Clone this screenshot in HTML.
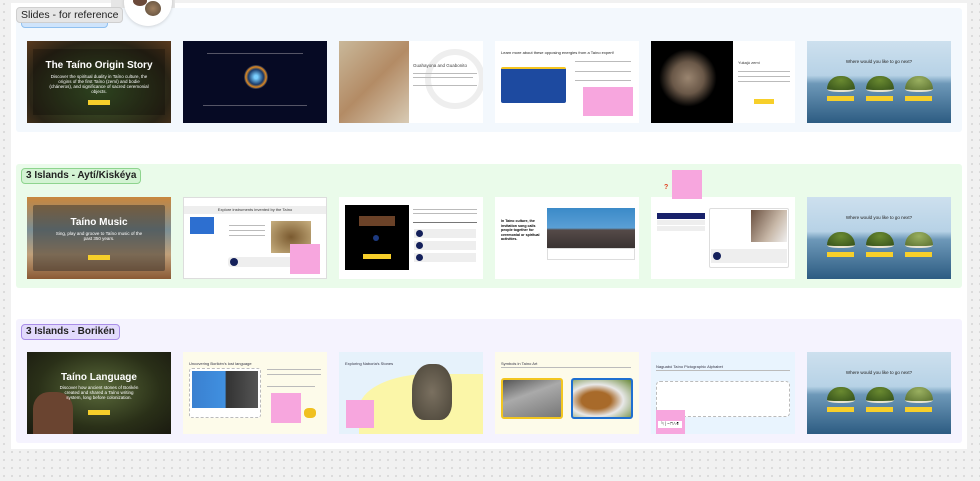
<!DOCTYPE html>
<html><head><meta charset="utf-8"><style>
*{margin:0;padding:0;box-sizing:border-box}
body{width:980px;height:481px;overflow:hidden;background:#f1f1f1;font-family:"Liberation Sans",sans-serif;position:relative;
background-image:radial-gradient(#c8c8c8 0.7px,transparent 0.9px);background-size:8px 8px}
.abs{position:absolute}
.frame{left:11px;top:3px;width:956px;height:446px;background:#fff}
.sec{left:16px;width:946px;height:124px;border-radius:3px}
.lbl{font-size:10px;font-weight:bold;color:#222;border-radius:4px;padding:1px 4px;line-height:12px}
.s{width:144px;height:82px;overflow:hidden;position:absolute}
.t{position:absolute;color:#fff;font-weight:bold;text-align:center;width:100%}
.ln{position:absolute;height:1px;background:#bbb}
.btn{position:absolute;background:#f7cf2a;height:5px}
.pink{position:absolute;background:#f7a6de}
.isl{position:absolute;width:28px;height:16px;border-radius:50% 50% 45% 45%/90% 90% 20% 20%;background:radial-gradient(ellipse at 50% 30%,#6a8a30,#34501a);border-bottom:2px solid #e8e4d0}
.sea{background:linear-gradient(#cde0ee 0%,#b7d2e6 42%,#6d98b8 52%,#2d5c82 100%)}
</style></head><body>
<div class="abs frame"></div>
<div class="abs" style="left:111px;top:0;width:64px;height:9px;background:#e6e6e6"></div>

<div class="abs sec" style="top:8px;background:#f3f8fd"></div>
<div class="abs sec" style="top:164px;background:#eafbea"></div>
<div class="abs sec" style="top:319px;background:#f5f3fe"></div>

<div class="abs" style="left:124px;top:-22px;width:48px;height:48px;border-radius:50%;background:#fff;box-shadow:0 1px 3px rgba(0,0,0,.15)"></div>
<div class="abs" style="left:133px;top:-4px;width:14px;height:10px;border-radius:50%;background:#6b4a3a"></div>
<div class="abs" style="left:145px;top:1px;width:16px;height:15px;border-radius:50%;background:radial-gradient(#a08060,#5a4a3a)"></div>

<div class="abs lbl" style="left:21px;top:12px;background:#cfe4fb;border:1px solid #8fc0f0">3 Islands - Kuba</div>
<div class="abs lbl" style="left:16px;top:7px;background:#e6e6e6;border:1px solid #cfcfcf;font-weight:normal;font-size:10.5px">Slides - for reference</div>
<div class="abs lbl" style="left:21px;top:168px;background:#d3f3d3;border:1px solid #8ed48e">3 Islands - Aytí/Kiskéya</div>
<div class="abs lbl" style="left:21px;top:324px;background:#e2dafc;border:1px solid #a98ee8">3 Islands - Borikén</div>

<!-- Row 1 -->
<div class="s" style="left:27px;top:41px;background:radial-gradient(ellipse at 50% 60%,#3d5a2a,#2a2416 70%,#5a3a1e)">
<div style="position:absolute;left:6px;top:8px;width:132px;height:66px;background:rgba(0,0,0,.25)"></div>
<div class="t" style="top:19px;font-size:10px">The Taíno Origin Story</div>
<div class="t" style="top:33px;font-size:4.5px;font-weight:normal;line-height:5px;padding:0 22px">Discover the spiritual duality in Taíno culture, the origins of the first Taíno (zemí) and bodie (cháneros), and significance of sacred ceremonial objects.</div>
<div class="btn" style="left:61px;top:59px;width:22px"></div></div>
<div class="s" style="left:183px;top:41px;background:#060a24">
<div style="position:absolute;left:61px;top:24px;width:24px;height:24px;border-radius:50%;background:radial-gradient(#7ad0ff 10%,#1a3a6a 45%,#e08a20 60%,#1a2a50 70%)"></div>
<div class="ln" style="left:24px;top:12px;width:96px;background:#556"></div>
<div class="ln" style="left:20px;top:64px;width:104px;background:#556"></div></div>
<div class="s" style="left:339px;top:41px;background:#fff">
<div style="position:absolute;left:0;top:0;width:70px;height:82px;background:linear-gradient(135deg,#c9b89a,#b38b65 50%,#d8cbb5)"></div>
<div style="position:absolute;left:86px;top:8px;width:60px;height:60px;border-radius:50%;border:6px solid #eee"></div>
<div style="position:absolute;left:74px;top:22px;font-size:4.5px;color:#444">Guahayona and Guabonito</div>
<div class="ln" style="left:74px;top:32px;width:64px"></div><div class="ln" style="left:74px;top:36px;width:60px"></div><div class="ln" style="left:74px;top:44px;width:64px"></div></div>
<div class="s" style="left:495px;top:41px;background:#fff">
<div style="position:absolute;left:6px;top:9px;font-size:4px;color:#222">Learn more about these opposing energies from a Taíno expert!</div>
<div style="position:absolute;left:6px;top:26px;width:65px;height:36px;background:#1d4aa0;border-top:2px solid #f5c520;border-radius:2px"></div>
<div class="ln" style="left:80px;top:20px;width:56px"></div><div class="ln" style="left:80px;top:30px;width:56px"></div><div class="ln" style="left:80px;top:39px;width:56px"></div>
<div class="pink" style="left:88px;top:46px;width:50px;height:29px"></div></div>
<div class="s" style="left:651px;top:41px;background:#fff">
<div style="position:absolute;left:0;top:0;width:82px;height:82px;background:radial-gradient(ellipse at 45% 45%,#9a8570 0,#6a5848 25%,#000 45%)"></div>
<div style="position:absolute;left:87px;top:19px;font-size:4px;color:#333">Yukajú zemí</div>
<div class="ln" style="left:87px;top:30px;width:52px"></div><div class="ln" style="left:87px;top:35px;width:52px"></div><div class="ln" style="left:87px;top:40px;width:52px"></div>
<div class="btn" style="left:103px;top:58px;width:20px"></div></div>
<div class="s sea" style="left:807px;top:41px">
<div style="position:absolute;top:18px;width:100%;text-align:center;font-size:4.5px;color:#222">Where would you like to go next?</div>
<div class="isl" style="left:20px;top:35px"></div><div class="isl" style="left:59px;top:35px"></div><div class="isl" style="left:98px;top:35px;background:radial-gradient(ellipse at 50% 30%,#9ab060,#5a7030)"></div>
<div class="btn" style="left:20px;top:55px;width:27px"></div><div class="btn" style="left:59px;top:55px;width:27px"></div><div class="btn" style="left:98px;top:55px;width:27px"></div></div>

<!-- Row 2 -->
<div class="s" style="left:27px;top:197px;background:linear-gradient(180deg,#c9873e 0%,#7b8f95 40%,#c0a07a 70%,#8a5a35)">
<div style="position:absolute;left:6px;top:8px;width:132px;height:66px;background:rgba(40,40,40,.45);border-radius:2px"></div>
<div class="t" style="top:20px;font-size:10px">Taíno Music</div>
<div class="t" style="top:34px;font-size:4.5px;font-weight:normal;padding:0 28px">Sing, play and groove to Taíno music of the past 350 years.</div>
<div class="btn" style="left:61px;top:58px;width:22px"></div></div>
<div class="s" style="left:183px;top:197px;background:#fff;border:1px solid #ddd">
<div style="position:absolute;left:0;top:8px;width:100%;height:8px;background:#eee;font-size:4px;text-align:center;line-height:8px;color:#333">Explore instruments invented by the Taíno</div>
<div style="position:absolute;left:6px;top:19px;width:24px;height:17px;background:#2d6fd0"></div>
<div style="position:absolute;left:87px;top:23px;width:40px;height:32px;background:radial-gradient(#7a5a30,#c8b080)"></div>
<div style="position:absolute;left:45px;top:27px;width:36px;height:1px;background:#bbb"></div><div style="position:absolute;left:45px;top:32px;width:36px;height:1px;background:#bbb"></div><div style="position:absolute;left:45px;top:37px;width:36px;height:1px;background:#bbb"></div>
<div style="position:absolute;left:44px;top:59px;width:70px;height:10px;background:#eee;border-radius:3px"></div>
<div style="position:absolute;left:46px;top:60px;width:8px;height:8px;border-radius:50%;background:#14205a"></div>
<div class="pink" style="left:106px;top:46px;width:30px;height:30px"></div></div>
<div class="s" style="left:339px;top:197px;background:#fff">
<div style="position:absolute;left:6px;top:8px;width:64px;height:65px;background:#000"></div>
<div style="position:absolute;left:20px;top:19px;width:36px;height:10px;background:#6b4228"></div>
<div style="position:absolute;left:34px;top:38px;width:6px;height:6px;border-radius:50%;background:#1d3a80"></div>
<div class="btn" style="left:24px;top:57px;width:28px"></div>
<div class="ln" style="left:74px;top:12px;width:64px"></div><div class="ln" style="left:74px;top:16px;width:64px"></div><div class="ln" style="left:74px;top:25px;width:64px;background:#777"></div>
<div style="position:absolute;left:75px;top:32px;width:62px;height:9px;background:#eee"></div><div style="position:absolute;left:75px;top:44px;width:62px;height:9px;background:#eee"></div><div style="position:absolute;left:75px;top:56px;width:62px;height:9px;background:#eee"></div>
<div style="position:absolute;left:77px;top:33px;width:7px;height:7px;border-radius:50%;background:#14205a"></div><div style="position:absolute;left:77px;top:45px;width:7px;height:7px;border-radius:50%;background:#14205a"></div><div style="position:absolute;left:77px;top:57px;width:7px;height:7px;border-radius:50%;background:#14205a"></div></div>
<div class="s" style="left:495px;top:197px;background:#fff">
<div style="position:absolute;left:6px;top:22px;font-size:3.6px;font-weight:bold;width:44px;line-height:4.5px">In Taíno culture, the invitation song calls people together for ceremonial or spiritual activities.</div>
<div style="position:absolute;left:52px;top:11px;width:88px;height:40px;background:linear-gradient(#3b8ac8 0,#5a9fd5 50%,#554a48 55%,#3a3332)"></div>
<div style="position:absolute;left:52px;top:51px;width:88px;height:12px;background:#fff;border:1px solid #ddd"></div></div>
<div class="s" style="left:651px;top:197px;background:#fff">
<div style="position:absolute;left:6px;top:16px;width:48px;height:6px;background:#18216a"></div>
<div style="position:absolute;left:6px;top:23px;width:48px;height:5px;background:#eee"></div><div style="position:absolute;left:6px;top:29px;width:48px;height:5px;background:#eee"></div>
<div style="position:absolute;left:58px;top:11px;width:80px;height:60px;border:1px solid #ddd;border-radius:2px"></div>
<div style="position:absolute;left:100px;top:13px;width:36px;height:32px;background:linear-gradient(120deg,#6a5040,#c8b8a8 60%,#f0f0f0)"></div>
<div style="position:absolute;left:60px;top:52px;width:76px;height:14px;background:#eee"></div>
<div style="position:absolute;left:62px;top:55px;width:8px;height:8px;border-radius:50%;background:#14205a"></div></div>
<div class="pink" style="left:672px;top:170px;width:30px;height:29px"></div>
<div class="abs" style="left:664px;top:184px;font-size:7px;color:#e04020;font-weight:bold">?</div>
<div class="s sea" style="left:807px;top:197px">
<div style="position:absolute;top:18px;width:100%;text-align:center;font-size:4.5px;color:#222">Where would you like to go next?</div>
<div class="isl" style="left:20px;top:35px"></div><div class="isl" style="left:59px;top:35px"></div><div class="isl" style="left:98px;top:35px;background:radial-gradient(ellipse at 50% 30%,#9ab060,#5a7030)"></div>
<div class="btn" style="left:20px;top:55px;width:27px"></div><div class="btn" style="left:59px;top:55px;width:27px"></div><div class="btn" style="left:98px;top:55px;width:27px"></div></div>

<!-- Row 3 -->
<div class="s" style="left:27px;top:352px;background:radial-gradient(ellipse at 50% 45%,#5a6a3a,#2a3018 60%,#1a1a10)">
<div style="position:absolute;left:6px;top:40px;width:40px;height:42px;border-radius:40% 40% 0 0;background:#6a4430"></div>
<div class="t" style="top:20px;font-size:10px">Taíno Language</div>
<div class="t" style="top:33px;font-size:4.5px;font-weight:normal;line-height:5px;padding:0 30px">Discover how ancient stones of Borikén created and shared a Taíno writing system, long before colonization.</div>
<div class="btn" style="left:61px;top:58px;width:22px"></div></div>
<div class="s" style="left:183px;top:352px;background:#fdfbea">
<div style="position:absolute;left:6px;top:9px;font-size:4px;color:#334">Uncovering Borikén's lost language</div>
<div style="position:absolute;left:6px;top:16px;width:72px;height:50px;border:1px dashed #bbb;border-radius:3px;background:#fff"></div>
<div style="position:absolute;left:9px;top:19px;width:66px;height:37px;background:linear-gradient(90deg,#3a80d0 0,#4090e0 50%,#333 52%,#555)"></div>
<div class="ln" style="left:84px;top:17px;width:54px"></div><div class="ln" style="left:84px;top:22px;width:54px"></div><div class="ln" style="left:84px;top:34px;width:48px"></div>
<div class="pink" style="left:88px;top:41px;width:30px;height:30px"></div>
<div style="position:absolute;left:121px;top:56px;width:12px;height:10px;background:#f0c020;border-radius:40%"></div></div>
<div class="s" style="left:339px;top:352px;background:#e6f2fb">
<div style="position:absolute;left:20px;top:22px;width:140px;height:70px;border-radius:50% 0 0 0;background:#fbf6a8"></div>
<div style="position:absolute;left:6px;top:9px;font-size:4px;color:#334">Exploring Naboria's Stones</div>
<div style="position:absolute;left:73px;top:12px;width:40px;height:56px;border-radius:45% 40% 30% 30%;background:radial-gradient(#7a7060,#4a4438)"></div>
<div class="pink" style="left:7px;top:48px;width:28px;height:28px"></div></div>
<div class="s" style="left:495px;top:352px;background:#fdfbea">
<div style="position:absolute;left:6px;top:9px;font-size:4px;color:#334">Symbols in Taíno Art</div>
<div class="ln" style="left:6px;top:15px;width:130px"></div>
<div style="position:absolute;left:6px;top:26px;width:62px;height:41px;border:2px solid #f2c620;border-radius:3px;background:linear-gradient(160deg,#555,#aaa 40%,#777)"></div>
<div style="position:absolute;left:76px;top:26px;width:62px;height:41px;border:2px solid #1e6fd0;border-radius:3px;background:radial-gradient(ellipse at 40% 55%,#a86a2a 30%,#e8e8e8 55%,#6a8a3a)"></div></div>
<div class="s" style="left:651px;top:352px;background:#e9f4fe">
<div style="position:absolute;left:5px;top:12px;font-size:4px;color:#334">Naguabó Taíno Pictographic Alphabet</div>
<div class="ln" style="left:5px;top:18px;width:134px"></div>
<div style="position:absolute;left:5px;top:29px;width:134px;height:36px;background:#fff;border:1px dashed #bbb;border-radius:4px"></div>
<div class="pink" style="left:5px;top:58px;width:29px;height:24px"></div>
<div style="position:absolute;left:7px;top:69px;width:24px;height:7px;background:#fff;font-size:5px;line-height:7px;text-align:center">ᛋ⟆∽⋂⋀⋷</div></div>
<div class="s sea" style="left:807px;top:352px">
<div style="position:absolute;top:18px;width:100%;text-align:center;font-size:4.5px;color:#222">Where would you like to go next?</div>
<div class="isl" style="left:20px;top:35px"></div><div class="isl" style="left:59px;top:35px"></div><div class="isl" style="left:98px;top:35px;background:radial-gradient(ellipse at 50% 30%,#9ab060,#5a7030)"></div>
<div class="btn" style="left:20px;top:55px;width:27px"></div><div class="btn" style="left:59px;top:55px;width:27px"></div><div class="btn" style="left:98px;top:55px;width:27px"></div></div>
</body></html>
